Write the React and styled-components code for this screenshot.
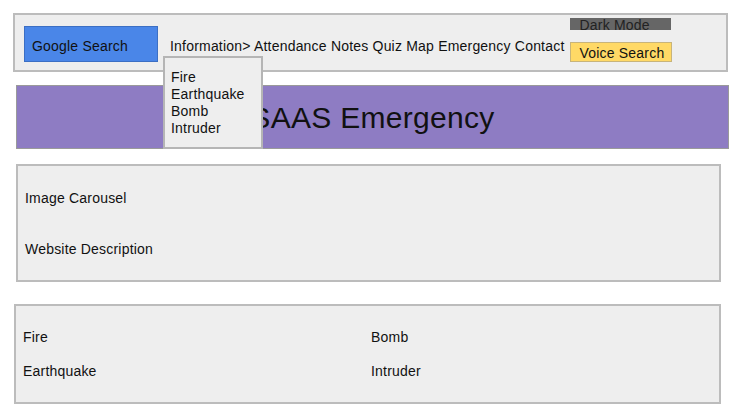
import styled, { createGlobalStyle } from "styled-components";

const GlobalStyle = createGlobalStyle`
  body {
    margin: 0;
    background: #ffffff;
    font-family: "Liberation Sans", Arial, sans-serif;
    font-size: 14px;
    line-height: 16px;
    letter-spacing: 0.2px;
    color: #111;
  }
  * { box-sizing: border-box; }
`;

const navLinks = ["Attendance", "Notes", "Quiz", "Map", "Emergency", "Contact"];
const emergencies = ["Fire", "Earthquake", "Bomb", "Intruder"];

export default function App() {
  return (
    <Page>
      <GlobalStyle />
      <Header>
        <GoogleSearch>Google Search</GoogleSearch>
        <Nav>
          <NavItem>
            Information&gt;
            <Dropdown>
              {emergencies.map((el) => (
                <DropdownItem key={el}>{el}</DropdownItem>
              ))}
            </Dropdown>
          </NavItem>{" "}
          {navLinks.join(" ")}
        </Nav>
        <Controls>
          <DarkMode>Dark Mode</DarkMode>
          <VoiceSearch>Voice Search</VoiceSearch>
        </Controls>
      </Header>

      <Banner>SAAS Emergency</Banner>

      <IntroCard>
        <span>Image Carousel</span>
        <span>Website Description</span>
      </IntroCard>

      <EmergencyCard>
        <span>Fire</span>
        <span>Bomb</span>
        <span>Earthquake</span>
        <span>Intruder</span>
      </EmergencyCard>
    </Page>
  );
}

const Page = styled.div`
  padding-bottom: 10px;
`;

const Header = styled.header`
  display: flex;
  align-items: flex-start;
  width: 715px;
  height: 59px;
  margin: 13px 0 0 13px;
  background: #eeeeee;
  border: 2px solid #bcbcbc;
`;

const GoogleSearch = styled.div`
  width: 134px;
  height: 36px;
  margin: 11px 0 0 9px;
  padding: 11px 0 0 7px;
  background: #4a86e8;
  border: 1px solid #3c6fc4;
  color: #111;
`;

const Nav = styled.nav`
  position: relative;
  margin: 23px 0 0 12px;
  white-space: nowrap;
`;

const NavItem = styled.span`
  position: relative;
`;

const Dropdown = styled.div`
  position: absolute;
  left: -7px;
  top: 18px;
  width: 100px;
  height: 93px;
  padding: 11px 0 0 6px;
  background: #eeeeee;
  border: 2px solid #b5b5b5;
  line-height: 17px;
  z-index: 2;
`;

const DropdownItem = styled.div``;

const Controls = styled.div`
  display: flex;
  flex-direction: column;
  gap: 12px;
  margin: 3px 0 0 6px;
`;

const DarkMode = styled.div`
  width: 101px;
  height: 12px;
  padding-left: 9px;
  background: #666666;
  color: #222;
  line-height: 14px;
  overflow: visible;
  white-space: nowrap;
`;

const VoiceSearch = styled.div`
  width: 102px;
  height: 20px;
  padding: 2px 0 0 8px;
  background: #ffd966;
  border: 1px solid #c8b47a;
  white-space: nowrap;
`;

const Banner = styled.div`
  display: flex;
  align-items: center;
  justify-content: center;
  width: 713px;
  height: 64px;
  margin: 13px 0 0 16px;
  padding-top: 1px;
  background: #8e7cc3;
  border: 1px solid #9a9a9a;
  font-size: 30px;
  line-height: 34px;
  letter-spacing: 0.3px;
  color: #111;
`;

const Card = styled.section`
  background: #eeeeee;
  border: 2px solid #bcbcbc;
`;

const IntroCard = styled(Card)`
  display: flex;
  flex-direction: column;
  gap: 35px;
  width: 705px;
  margin: 15px 0 0 16px;
  padding: 24px 0 23px 7px;
`;

const EmergencyCard = styled(Card)`
  display: grid;
  grid-template-columns: 348px 1fr;
  row-gap: 18px;
  width: 707px;
  margin: 22px 0 0 14px;
  padding: 23px 0 23px 7px;
`;
